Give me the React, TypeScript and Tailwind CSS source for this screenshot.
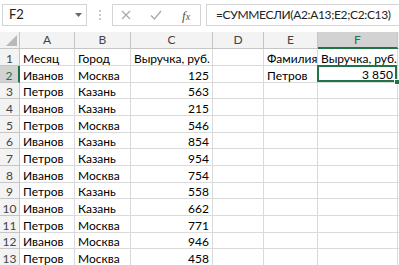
import React from "react"

const rows: [string, string, string][] = [
  ["Иванов", "Москва", "125"],
  ["Петров", "Казань", "563"],
  ["Иванов", "Казань", "215"],
  ["Петров", "Москва", "546"],
  ["Иванов", "Казань", "854"],
  ["Петров", "Казань", "954"],
  ["Иванов", "Москва", "754"],
  ["Петров", "Казань", "558"],
  ["Иванов", "Казань", "662"],
  ["Петров", "Москва", "771"],
  ["Иванов", "Москва", "946"],
  ["Петров", "Москва", "458"],
]

const cols = [
  { key: "A", w: "w-[55px]" },
  { key: "B", w: "w-[56px]" },
  { key: "C", w: "w-[82px]" },
  { key: "D", w: "w-[51px]" },
  { key: "E", w: "w-[54px]" },
  { key: "F", w: "w-[80px]" },
]

function Cell({ w, children, right }: { w: string; children?: React.ReactNode; right?: boolean }) {
  return (
    <div
      className={`${w} shrink-0 h-full border-r border-b border-[#dadada] flex items-center pt-[3px] px-[3px] leading-[14px] overflow-visible whitespace-nowrap ${right ? "justify-end" : ""}`}
    >
      {children}
    </div>
  )
}

export default function App() {
  const all: string[][] = [
    ["Месяц", "Город", "Выручка, руб.", "", "Фамилия", "Выручка, руб."],
    ...rows.map((r, i) => (i === 0 ? [r[0], r[1], r[2], "", "Петров", "3 850"] : [r[0], r[1], r[2], "", "", ""])),
  ]

  return (
    <div className="w-[399px] h-[265px] overflow-hidden bg-white text-[12px] text-black" style={{ fontFamily: "Lato, 'Liberation Sans', sans-serif" }}>
      {/* formula bar */}
      <div className="h-[32px] flex items-start pt-[4px] pl-[2px]">
        <div className="w-[85px] shrink-0 h-[22px] border border-[#d4d4d4] flex items-center pl-[6px] pr-[4px] justify-between">
          <span className="text-[#222] text-[13px]">F2</span>
          <svg width="7" height="4" viewBox="0 0 7 4"><path d="M0 0h7L3.5 4z" fill="#6a6a6a" /></svg>
        </div>
        <div className="w-[25px] shrink-0 h-[22px] flex flex-col items-center justify-center gap-[2px]">
          <span className="w-[2px] h-[2px] bg-[#c8c8c8]" />
          <span className="w-[2px] h-[2px] bg-[#c8c8c8]" />
          <span className="w-[2px] h-[2px] bg-[#c8c8c8]" />
        </div>
        <div className="w-[89px] shrink-0 h-[22px] border border-[#d4d4d4] flex items-center">
          <div className="w-[26px] flex justify-center">
            <svg width="10" height="10" viewBox="0 0 10 10"><path d="M1 1l8 8M9 1l-8 8" stroke="#a8a8a8" strokeWidth="1.2" /></svg>
          </div>
          <div className="w-[34px] flex justify-center">
            <svg width="12" height="10" viewBox="0 0 12 10"><path d="M1 5.5l3.5 3.5L11 1" stroke="#a8a8a8" strokeWidth="1.3" fill="none" /></svg>
          </div>
          <div className="w-[28px] flex justify-center">
            <span className="italic text-[#555] text-[13px] leading-none" style={{ fontFamily: "'Liberation Serif', serif" }}>
              f<span className="text-[10px]">x</span>
            </span>
          </div>
        </div>
        <div className="ml-[5px] flex-1 min-w-0 overflow-hidden h-[22px] border border-r-0 border-[#d4d4d4] flex items-center pl-[9px] text-[#222] text-[12px] tracking-[-0.35px] whitespace-nowrap">
          =СУММЕСЛИ(A2:A13;E2;C2:C13)
        </div>
      </div>

      {/* column headers */}
      <div className="h-[17px] flex bg-[#f3f3f3] text-[#444] leading-[14px]">
        <div className="w-[20px] shrink-0 h-full border-r border-b border-[#c6c6c6] relative">
          <svg className="absolute right-[2px] bottom-[2px]" width="11" height="11" viewBox="0 0 11 11"><path d="M11 0v11H0z" fill="#b9b9b9" /></svg>
        </div>
        {cols.map((c) =>
          c.key === "F" ? (
            <div key={c.key} className={`${c.w} shrink-0 h-full border-r border-[#c6c6c6] border-b-2 border-b-[#217346] bg-[#d2d2d2] text-[#217346] flex items-center justify-center pt-[1px]`}>
              {c.key}
            </div>
          ) : (
            <div key={c.key} className={`${c.w} shrink-0 h-full border-r border-b border-[#c6c6c6] flex items-center justify-center`}>
              {c.key}
            </div>
          )
        )}
        <div className="flex-1 h-full border-b border-[#c6c6c6]" />
      </div>

      {/* grid rows */}
      {all.map((r, i) => (
        <div key={i} className={`flex ${i % 3 === 2 ? "h-[16px]" : "h-[17px]"}`}>
          <div
            className={`w-[20px] shrink-0 h-full border-b border-[#c6c6c6] flex items-center justify-center pt-[3px] leading-[14px] text-[#444] ${
              i === 1 ? "bg-[#d2d2d2] border-r-2 border-r-[#217346] text-[#217346]" : "bg-[#f3f3f3] border-r"
            }`}
          >
            {i + 1}
          </div>
          {cols.map((c, j) => {
            const v = r[j]
            const right = i > 0 && (j === 2 || j === 5)
            if (i === 1 && c.key === "F") {
              return (
                <div key={c.key} className={`${c.w} shrink-0 h-full border-r border-b border-[#dadada] relative`}>
                  <div className="absolute -left-[1px] -top-[1px] right-0 bottom-0 border-2 border-[#217346] flex items-center justify-end pt-[3px] pr-[2px] leading-[14px]">
                    {v}
                  </div>
                  <div className="absolute -right-[3px] -bottom-[3px] w-[6px] h-[6px] bg-[#217346] border border-white" />
                </div>
              )
            }
            return (
              <Cell key={c.key} w={c.w} right={right}>
                {v}
              </Cell>
            )
          })}
          <div className="flex-1 h-full border-b border-[#dadada]" />
        </div>
      ))}
    </div>
  )
}
